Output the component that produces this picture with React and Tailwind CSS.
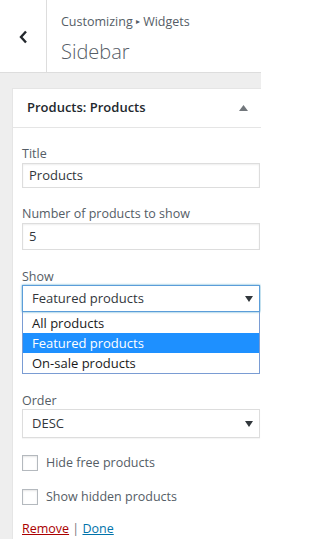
import React from "react";

const font = { fontFamily: '"Open Sans", "Noto Sans", sans-serif' };

const Label = ({ children }) => (
  <label className="block text-[12.5px] leading-[16px] text-[#555d66]">{children}</label>
);

const Check = ({ label }) => (
  <div className="flex items-center gap-[8px] h-[16px]">
    <span className="w-[16px] h-[16px] border border-[#b4b9be] bg-white shadow-[inset_0_1px_2px_rgba(0,0,0,0.1)]" />
    <span className="text-[12.5px] text-[#555d66]">{label}</span>
  </div>
);

const Arrow = () => (
  <svg width="8" height="6" viewBox="0 0 8 6" className="fill-[#32373c]">
    <path d="M0 0h8L4 6z" />
  </svg>
);

export default function App() {
  return (
    <div className="w-[261px] h-[539px] overflow-hidden bg-[#eeeeee] text-[#555d66]" style={font}>
      <div className="flex h-[73px] bg-white border-b border-[#dddddd]">
        <div className="w-[47px] flex items-center justify-center border-r border-[#dddddd]">
          <svg width="10" height="14" viewBox="0 0 10 14" className="mt-[2px]">
            <path d="M8 1.5 L3 7 L8 12.5" fill="none" stroke="#23282d" strokeWidth="2.4" />
          </svg>
        </div>
        <div className="flex flex-col pl-[14px] pt-[12px]">
          <span className="text-[12.5px] leading-[18px] text-[#555d66]">
            Customizing <span className="text-[8px] align-[2px]">▸</span> Widgets
          </span>
          <span className="text-[20px] leading-[28px] font-light text-[#555d66] mt-[7px]">Sidebar</span>
        </div>
      </div>

      <div className="pl-[12px] pt-[15px]">
        <div className="w-[258px] bg-white border border-[#e5e5e5]">
          <div className="flex items-center justify-between h-[39px] pl-[14px] pr-[21px] border-b border-[#e5e5e5]">
            <span className="text-[13px] font-semibold text-[#23282d]">Products: Products</span>
            <svg width="9" height="6" viewBox="0 0 9 6" className="fill-[#72777c]">
              <path d="M0 6h9L4.5 0z" />
            </svg>
          </div>

          <div className="flex flex-col px-[9px] pt-[18px]">
            <Label>Title</Label>
            <div className="h-[25px] mt-[1px] border border-[#dddddd] shadow-[inset_0_1px_2px_rgba(0,0,0,0.07)] flex items-center px-[6px] text-[13px] text-[#32373c]">
              Products
            </div>

            <div className="mt-[18px]">
              <Label>Number of products to show</Label>
            </div>
            <div className="h-[27px] mt-[1px] border border-[#dddddd] shadow-[inset_0_1px_2px_rgba(0,0,0,0.07)] flex items-center px-[6px] text-[13px] text-[#32373c]">
              5
            </div>

            <div className="mt-[19px]">
              <Label>Show</Label>
            </div>
            <div className="h-[27px] border border-[#5b9dd9] shadow-[0_0_2px_rgba(30,140,190,0.8)] flex items-center justify-between pl-[9px] pr-[6px] text-[13px] text-[#32373c]">
              <span>Featured products</span>
              <Arrow />
            </div>
            <div className="border border-[#7a9cd3] border-t-0 pt-[1px] text-[13px] leading-[20px] text-[#1a1a1a]">
              <div className="px-[9px]">All products</div>
              <div className="px-[9px] bg-[#1e90ff] text-white">Featured products</div>
              <div className="px-[9px]">On-sale products</div>
            </div>

            <div className="mt-[19px]">
              <Label>Order</Label>
            </div>
            <div className="h-[29px] border border-[#dddddd] shadow-[0_1px_1px_rgba(0,0,0,0.04)] flex items-center justify-between pl-[9px] pr-[6px] text-[13px] text-[#32373c]">
              <span>DESC</span>
              <Arrow />
            </div>

            <div className="flex flex-col gap-[18px] mt-[17px]">
              <Check label="Hide free products" />
              <Check label="Show hidden products" />
            </div>

            <div className="mt-[16px] text-[12.5px] leading-[16px] pb-[10px]">
              <a href="#" className="text-[#a00] underline">Remove</a>
              <span className="text-[#72777c]"> | </span>
              <a href="#" className="text-[#0073aa] underline">Done</a>
            </div>
          </div>
        </div>
      </div>
    </div>
  );
}
